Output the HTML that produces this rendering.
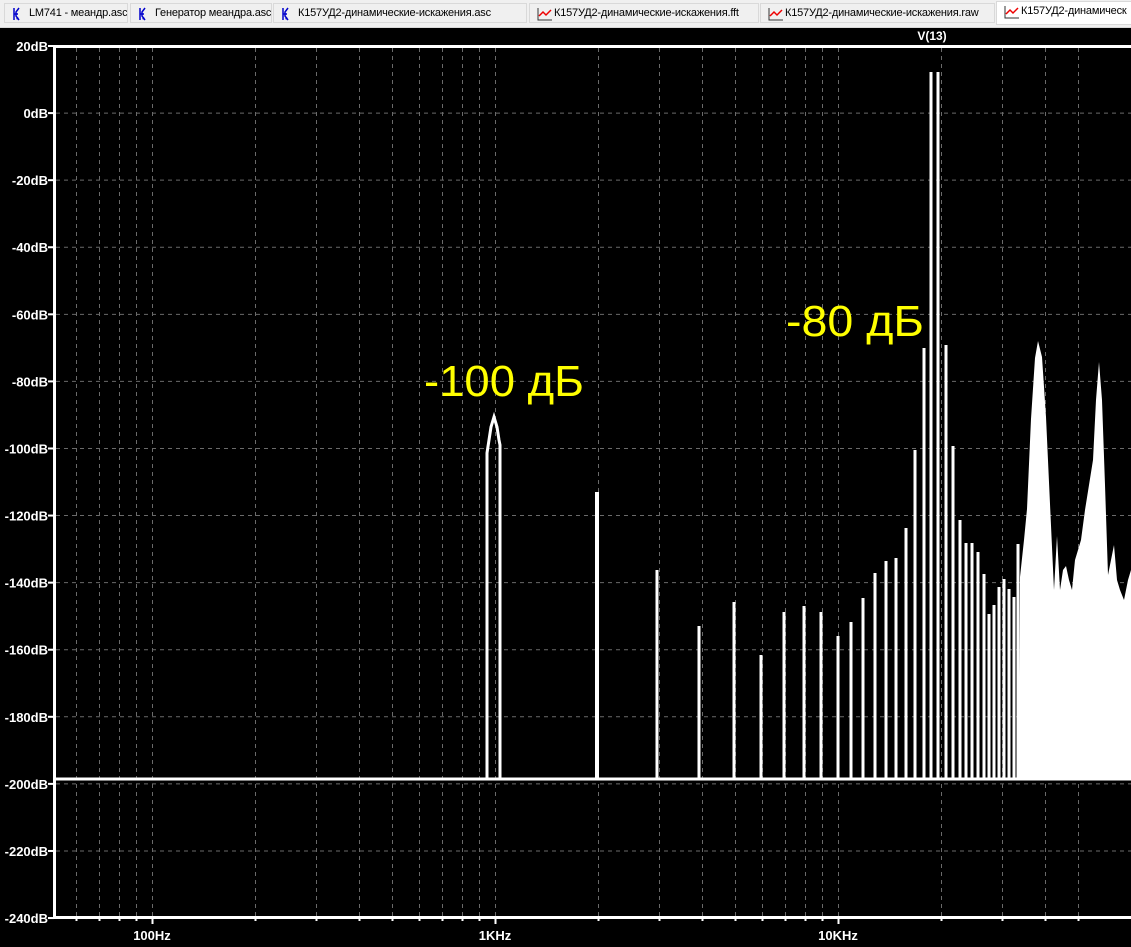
<!DOCTYPE html>
<html><head><meta charset="utf-8"><style>
*{margin:0;padding:0;box-sizing:border-box}
body{width:1131px;height:947px;overflow:hidden;background:#000;font-family:"Liberation Sans",sans-serif}
#tabs{position:absolute;left:0;top:0;width:1131px;height:28px;background:#f0f0f0;border-bottom:1px solid #d8d8d8}
.tab{position:absolute;top:3px;height:20px;border:1px solid #d9d9d9;background:#f0f0f0;font-size:11px;letter-spacing:-0.2px;color:#000;line-height:18px;white-space:nowrap;overflow:hidden;padding-left:24px}
.tab.act{background:#fff;top:1px;height:24px}
.ic{position:absolute;left:6px;top:2px}
</style></head><body>
<div id="tabs">
<div class="tab" style="left:4px;width:124px"><svg class="ic" width="16" height="16"><path d="M3 2v12M3 8h4M8 2L5 6v4l3 4" stroke="#00c" stroke-width="1.5" fill="none"/><path d="M8 14l-3-1 2-2z" fill="#00c"/></svg>LM741 - меандр.asc</div>
<div class="tab" style="left:130px;width:142px"><svg class="ic" width="16" height="16"><path d="M3 2v12M3 8h4M8 2L5 6v4l3 4" stroke="#00c" stroke-width="1.5" fill="none"/><path d="M8 14l-3-1 2-2z" fill="#00c"/></svg>Генератор меандра.asc</div>
<div class="tab" style="left:273px;width:254px"><svg class="ic" width="16" height="16"><path d="M3 2v12M3 8h4M8 2L5 6v4l3 4" stroke="#00c" stroke-width="1.5" fill="none"/><path d="M8 14l-3-1 2-2z" fill="#00c"/></svg>К157УД2-динамические-искажения.asc</div>
<div class="tab" style="left:529px;width:230px"><svg class="ic" width="18" height="16"><path d="M2 2v12h14" stroke="#333" fill="none"/><path d="M3 10l4-4 3 3 5-5" stroke="#e00" stroke-width="1.5" fill="none"/></svg>К157УД2-динамические-искажения.fft</div>
<div class="tab" style="left:760px;width:235px"><svg class="ic" width="18" height="16"><path d="M2 2v12h14" stroke="#333" fill="none"/><path d="M3 10l4-4 3 3 5-5" stroke="#e00" stroke-width="1.5" fill="none"/></svg>К157УД2-динамические-искажения.raw</div>
<div class="tab act" style="left:996px;width:140px"><svg class="ic" width="18" height="16"><path d="M2 2v12h14" stroke="#333" fill="none"/><path d="M3 10l4-4 3 3 5-5" stroke="#e00" stroke-width="1.5" fill="none"/></svg>К157УД2-динамическ</div>
</div>
<svg style="position:absolute;left:0;top:28px" width="1131" height="919" viewBox="0 28 1131 919">
<g stroke="#6a6a6a" stroke-width="1" stroke-dasharray="4,4" id="grid"></g>
<g id="spk" fill="#fff"></g>
<polyline points="487,779 487,453 489,440 491,427 494,417 497,427 499,440 500,445 500,779" fill="none" stroke="#fff" stroke-width="3"/>
<line x1="53" y1="779" x2="1131" y2="779" stroke="#fff" stroke-width="3"/>
<polygon fill="#fff" points="1019,779 1020,577 1024,540 1027,509 1031,419 1035,358 1038,341 1042,357 1046,417 1050,504 1054,590 1057,536 1060,590 1063,570 1066,566 1069,580 1072,590 1075,560 1078,550 1081,540 1085,510 1089,485 1093,460 1096,400 1099,362 1102,400 1105,485 1108,575 1111,560 1114,545 1117,580 1120,590 1124,600 1128,580 1131,570 1131,779"/>
<rect x="53" y="45" width="1078" height="3" fill="#fff"/>
<rect x="53" y="916" width="1078" height="3" fill="#fff"/>
<rect x="53" y="45" width="3" height="874" fill="#fff"/>
<g id="lab" fill="#fff" font-family="Liberation Sans,sans-serif" font-size="13" font-weight="bold"></g>
<text x="932" y="40" fill="#fff" font-family="Liberation Sans,sans-serif" font-size="12" font-weight="bold" text-anchor="middle">V(13)</text>
<text x="424" y="396" fill="#ffff00" font-family="Liberation Sans,sans-serif" font-size="44" textLength="160" lengthAdjust="spacingAndGlyphs">-100 дБ</text>
<text x="786" y="336" fill="#ffff00" font-family="Liberation Sans,sans-serif" font-size="44" textLength="138" lengthAdjust="spacingAndGlyphs">-80 дБ</text>
</svg>
<script>
var ns="http://www.w3.org/2000/svg";
function el(p,t,a,txt){var e=document.createElementNS(ns,t);for(var k in a)e.setAttribute(k,a[k]);if(txt)e.textContent=txt;document.getElementById(p).appendChild(e);}
var X=function(f){return 152+343*Math.log10(f/100)};
for(var i=0;i<14;i++){var y=46+i*67.08;var db=20-20*i;
 if(i>0&&i<13)el("grid","line",{x1:56,y1:y,x2:1131,y2:y});
 el("lab","text",{x:48,y:y+5,"text-anchor":"end"},db+"dB");
 el("lab","rect",{x:48,y:y-1,width:6,height:2});}
[60,70,80,90,100,200,300,400,500,600,700,800,900,1000,2000,3000,4000,5000,6000,7000,8000,9000,10000,20000,30000,40000,50000].forEach(function(f){var x=Math.round(X(f))+.5;
 el("grid","line",{x1:x,y1:48,x2:x,y2:916});el("lab","rect",{x:x-1,y:918,width:2,height:(f==100||f==1000||f==10000)?6:3});});
el("lab","text",{x:152,y:940,"text-anchor":"middle"},"100Hz");
el("lab","text",{x:495,y:940,"text-anchor":"middle"},"1KHz");
el("lab","text",{x:838,y:940,"text-anchor":"middle"},"10KHz");
var s=[[597,492,4],[657,570],[699,626],[734,602],[761,655],[784,612],[804,606],[821,612],[838,636],[851,622],[863,598],[875,573],[886,561],[896,558],[906,528],[915,450],[924,348],[931,72],[938,72],[946,345],[953,446],[960,520],[966,543],[972,543],[978,552],[984,574],[989,614],[994,605],[999,587],[1004,579],[1009,589],[1014,597],[1018,544]];
s.forEach(function(a){var w=a[2]||3;el("spk","rect",{x:a[0]-w/2,y:a[1],width:w,height:779-a[1]});});
</script>
</body></html>
